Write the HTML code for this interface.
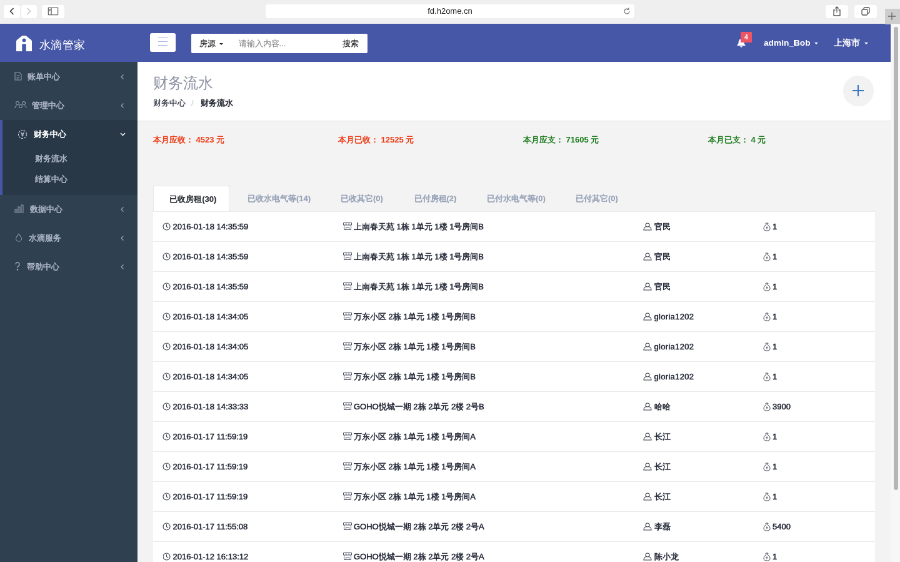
<!DOCTYPE html>
<html lang="zh">
<head>
<meta charset="utf-8">
<title>财务流水</title>
<style>
*{box-sizing:border-box;margin:0;padding:0}
html,body{width:900px;height:562px;overflow:hidden;background:#f3f3f4;position:relative}
body{font-family:"Liberation Sans",sans-serif;font-size:13px;color:#676a6c}
#root{position:absolute;left:0;top:0;width:1440px;height:899.200px;transform:scale(.625);transform-origin:0 0;overflow:hidden;will-change:transform}
svg{display:block}
/* safari chrome */
.safari{position:absolute;left:0;top:0;width:1440px;height:38px;background:#efefef}
.sbtn{position:absolute;top:7.800px;height:21px;background:#fff;border-radius:4px}
.sbtn svg{position:absolute;left:50%;top:50%;transform:translate(-50%,-50%)}
.url{position:absolute;left:425px;top:7px;width:590px;height:22px;background:#fff;border-radius:4px;text-align:center;font-size:13px;line-height:22px;color:#222}
.newtab{position:absolute;left:1416px;top:13.500px;width:24px;height:25px;background:#cdcdcd}
/* scrollbar */
.sbar{position:absolute;left:1425px;top:38px;width:15px;height:862px;background:#f7f7f7}
.sbar i{position:absolute;left:4.500px;top:4.500px;width:7px;height:741px;border-radius:4px;background:#b6b6b6}
/* page */
.page{position:absolute;left:0;top:38px;width:1425px;height:862px;overflow:hidden;background:#f3f3f4}
.side{position:absolute;left:0;top:0;width:220px;height:862px;background:linear-gradient(to bottom,transparent 61px,#2f4050 61px)}
.logo{height:61px;position:relative}
.logo svg{position:absolute;left:26px;top:19px}
.logo span{position:absolute;left:62.500px;top:20px;font-size:18px;line-height:28px;color:#fff;font-weight:300;letter-spacing:.6px}
.nav{list-style:none;padding-top:1px}
.nav>li>a{text-shadow:0 0 .6px rgba(167,177,194,.55);display:block;height:46px;line-height:46px;padding-left:44px;color:#a7b1c2;font-weight:bold;font-size:13px;position:relative;text-decoration:none}
.nav>li>a svg.ic{position:absolute;left:23px;top:15px}
.nav>li>a svg.arr{position:absolute;left:193px;top:18px}
.nav>li.act{background:#293846;border-left:4px solid #4757a7;padding-bottom:9px}
.nav>li.act>a{color:#fff;padding-left:50px;text-shadow:0 0 .6px rgba(255,255,255,.55)}
.nav>li.act>a svg.ic{left:24px}
.nav>li.act>a svg.arr{left:188px}
.nav ul{list-style:none}
.nav ul a{text-shadow:0 0 .6px rgba(167,177,194,.55);display:block;height:32.5px;line-height:32.5px;padding-left:52px;color:#a7b1c2;font-weight:bold;text-decoration:none}
.main{position:absolute;left:220px;top:0;width:1205px;height:862px}
.top{height:61px;position:relative}
.ham{position:absolute;left:20px;top:14.5px;width:41px;height:30px;background:#fff;border-radius:3px}
.ham i{position:absolute;left:13px;width:15px;height:1.5px;background:#aab4e6}
.search{position:absolute;left:86px;top:16px;width:282px;height:31px;background:#fff;border-radius:2px;font-size:13px;line-height:31px;color:#262626;text-shadow:0 0 .6px rgba(38,38,38,.5)}
.search span{position:absolute;top:0}
.caret{display:inline-block;width:0;height:0;border-left:3px solid transparent;border-right:3px solid transparent;border-top:3.500px solid currentColor;vertical-align:middle;margin-left:6px}
.tr{position:absolute;top:0;height:61px;line-height:61px;color:#fff;font-size:13.700px;font-weight:bold;white-space:nowrap}
.tr .caret{margin-left:6.500px;border-left-width:3.500px;border-right-width:3.500px}
.title{height:95.200px;background:#fff;border-bottom:1px solid #dfe2e6;position:relative}
.title h2{position:absolute;left:25px;top:19px;font-size:23.500px;line-height:30px;font-weight:100;color:#8d94a3}
.bc{position:absolute;left:25px;top:57px;font-size:13px;line-height:18px;color:#2c313e;text-shadow:0 0 .7px rgba(44,49,62,.55)}
.bc b{color:#2a2e36}
.bc i{font-style:normal;text-shadow:none;color:#c4c6c8;padding:0 11px 0 9px}
.plus{position:absolute;left:1128.800px;top:21.500px;width:49px;height:49px;border-radius:50%;background:#f2f2f3}
.plus:before,.plus:after{content:"";position:absolute;background:#3b76c0}
.plus:before{left:15.500px;top:23.600px;width:18px;height:1.800px}
.plus:after{left:23.600px;top:15.500px;width:1.800px;height:18px}
.stats{position:absolute;left:0;top:176px;width:1205px;height:20px;font-size:13px;font-weight:bold;line-height:20px}
.stats span{position:absolute;top:0;white-space:nowrap}
.red{color:#ee3a12}.green{color:#1d7d1d}
.tabs{position:absolute;left:25px;top:259.300px;height:40.400px;width:1154.500px;font-size:13px;font-weight:bold;color:#98a3b8;text-shadow:0 0 .6px rgba(152,163,184,.5);line-height:41.600px}
.tabs span{position:absolute;top:0;white-space:nowrap}
.tabs .on{left:0;width:121.500px;height:41.400px;padding-left:6px;background:#fff;border:1px solid #e7eaec;border-bottom:none;color:#30343a;text-shadow:0 0 .6px rgba(48,52,58,.5);text-align:center;border-radius:3px 3px 0 0}
.panel{position:absolute;left:25px;top:299.700px;width:1154.500px;height:600px;background:#fff;border-top:1px solid #e7eaec}
.row{height:48px;border-bottom:1px solid #e7eaec;position:relative;font-size:13px;line-height:48.400px;color:#202534;-webkit-text-stroke:.35px #202534;text-shadow:0 0 .7px rgba(32,37,52,.5);white-space:nowrap}
.row span{position:absolute;top:0;padding-left:16px}
.row svg{position:absolute;left:-.5px;top:17px}
.c1{left:15.500px}.c2{left:305px}.c2 svg{left:-1.500px}.c3{left:785.500px;letter-spacing:.3px}.c3 svg{left:-2px}.c4{left:975px}.c4 svg{left:.5px}
</style>
</head>
<body>
<div id="root">

<div class="page">
  <div style="position:absolute;left:0;top:0;width:1425px;height:61px;background:#4757a7"></div>
  <div class="side">
    <div class="logo">
      <svg width="25" height="25" viewBox="0 0 25 25"><path d="M9 .5Q12.500-1 16 .5L23.500 6.500Q25 7.500 25 9.500V25H0V9.500Q0 7.500 1.500 6.500z" fill="#fff"/><rect x="9.300" y="13.300" width="6.400" height="11.700" fill="#4757a7"/><circle cx="12.500" cy="7.300" r="2.900" fill="#4757a7"/></svg>
      <span>水滴管家</span>
    </div>
    <ul class="nav">
      <li><a><svg class="ic" width="12" height="14" viewBox="0 0 12 14" fill="none" stroke="#8e99ab" stroke-width="1.100"><path d="M1 1h7l3 3v9H1z"/><path d="M3.500 6h5M3.500 8.500h5M3.500 11h3"/></svg>账单中心<svg class="arr" width="6" height="10" viewBox="0 0 6 10" fill="none" stroke="#97a2b3" stroke-width="1.300"><path d="M4.500 1.500L1 5l3.500 3.500"/></svg></a></li>
      <li><a style="padding-left:51px"><svg class="ic" width="20" height="14" viewBox="0 0 20 14" fill="none" stroke="#8e99ab" stroke-width="1.100"><circle cx="5" cy="4" r="2.500"/><circle cx="15" cy="4" r="2.500"/><circle cx="10" cy="9" r="2.500"/><path d="M1 12c0-3 2-4 4-4M19 12c0-3-2-4-4-4"/></svg>管理中心<svg class="arr" width="6" height="10" viewBox="0 0 6 10" fill="none" stroke="#97a2b3" stroke-width="1.300"><path d="M4.500 1.500L1 5l3.500 3.500"/></svg></a></li>
      <li class="act"><a><svg class="ic" width="16" height="16" viewBox="0 0 16 16" fill="none" stroke="#c5ccd8" stroke-width="1.200"><circle cx="8" cy="8" r="6.500" stroke-dasharray="3 1.500"/><path d="M5.500 5L8 8l2.500-3M8 8v3.500M6 9h4"/></svg>财务中心<svg class="arr" width="9" height="6" viewBox="0 0 9 6" fill="none" stroke="#fff" stroke-width="1.400" style="top:20px"><path d="M1 1l3.500 3.500L8 1"/></svg></a>
        <ul><li><a>财务流水</a></li><li><a>结算中心</a></li></ul>
      </li>
      <li><a style="padding-left:48px"><svg class="ic" width="15" height="14" viewBox="0 0 15 14" fill="none" stroke="#8e99ab" stroke-width="1.100"><path d="M1 8h3v5H1zM6 4h3v9H6zM11 1h3v12h-3z"/></svg>数据中心<svg class="arr" width="6" height="10" viewBox="0 0 6 10" fill="none" stroke="#97a2b3" stroke-width="1.300"><path d="M4.500 1.500L1 5l3.500 3.500"/></svg></a></li>
      <li><a style="padding-left:46px"><svg class="ic" width="14" height="14" viewBox="0 0 14 14" fill="none" stroke="#8e99ab" stroke-width="1.100"><path d="M7 1.200C5 4 2.500 6 2.500 8.800a4.500 4.500 0 0 0 9 0C11.500 6 9 4 7 1.200z"/></svg>水滴服务<svg class="arr" width="6" height="10" viewBox="0 0 6 10" fill="none" stroke="#97a2b3" stroke-width="1.300"><path d="M4.500 1.500L1 5l3.500 3.500"/></svg></a></li>
      <li><a style="padding-left:42.500px"><svg class="ic" width="10" height="14" viewBox="0 0 10 14" fill="none" stroke="#a7b1c2" stroke-width="1.400"><path d="M2 4a3 3 0 1 1 4.500 2.600C5.500 7.300 5 8 5 9.500"/><circle cx="5" cy="12.300" r=".600" fill="#a7b1c2"/></svg>帮助中心<svg class="arr" width="6" height="10" viewBox="0 0 6 10" fill="none" stroke="#97a2b3" stroke-width="1.300"><path d="M4.500 1.500L1 5l3.500 3.500"/></svg></a></li>
    </ul>
  </div>

  <div class="main">
    <div class="top">
      <div class="ham"><i style="top:7px"></i><i style="top:13px"></i><i style="top:19px"></i></div>
      <div class="search"><span style="left:13px">房源<b class="caret"></b></span><span style="left:75.500px;color:#8e8e8e;text-shadow:0 0 .6px rgba(142,142,142,.5)">请输入内容...</span><span style="left:242px">搜索</span></div>
      <svg style="position:absolute;left:958px;top:23px" width="16" height="16" viewBox="0 0 16 16"><path d="M8 1.500c-2.800 0-4.300 2-4.300 4.500 0 3-1.200 4.200-2.200 5v1h13v-1c-1-.800-2.200-2-2.200-5 0-2.500-1.500-4.500-4.300-4.500zM6.200 13a1.800 1.800 0 0 0 3.600 0z" fill="#fff"/></svg>
      <div style="position:absolute;left:965px;top:13px;width:18px;height:17px;background:#ed5565;border-radius:1px;color:#fff;font-size:10.500px;font-weight:bold;line-height:17px;text-align:center">4</div>
      <div class="tr" style="left:1002px">admin_Bob<b class="caret"></b></div>
      <div class="tr" style="left:1114px">上海市<b class="caret"></b></div>
    </div>
    <div class="title">
      <h2>财务流水</h2>
      <div class="bc">财务中心<i>/</i><b>财务流水</b></div>
      <div class="plus"></div>
    </div>
    <div class="stats">
      <span class="red" style="left:25px">本月应收： 4523 元</span>
      <span class="red" style="left:321px">本月已收： 12525 元</span>
      <span class="green" style="left:617px">本月应支： 71605 元</span>
      <span class="green" style="left:913px">本月已支： 4 元</span>
    </div>
    <div class="tabs">
      <span class="on">已收房租(30)</span>
      <span style="left:151px">已收水电气等(14)</span>
      <span style="left:300px">已收其它(0)</span>
      <span style="left:417.500px">已付房租(2)</span>
      <span style="left:534px">已付水电气等(0)</span>
      <span style="left:676px">已付其它(0)</span>
    </div>
    <div class="panel" id="panel">
      <div class="row"><span class="c1"><svg width="13" height="13" viewBox="0 0 13 13" fill="none" stroke="#3a3f4b" stroke-width="1.100"><circle cx="6.500" cy="6.500" r="5.500"/><path d="M6.500 3v3.700l2.500 1.500"/></svg>2016-01-18 14:35:59</span><span class="c2"><svg width="14" height="12" viewBox="0 0 14 12" fill="none" stroke="#4f5565" stroke-width="1"><path d="M.5 .5h13v3.500h-13zM1.500 4v7.500h11V4M4.800 .5v3.500M9.200 .5v3.500M4.500 11.500V7.500h5v4"/></svg>上南春天苑 1栋 1单元 1楼 1号房间B</span><span class="c3"><svg width="14" height="13" viewBox="0 0 14 13" fill="none" stroke="#3a3f4b" stroke-width="1.100"><circle cx="7" cy="4" r="3"/><path d="M4.800 6.500C2 7.500 1 9.500 1 12h12c0-2.500-1-4.500-3.800-5.500"/></svg>官民</span><span class="c4"><svg width="12" height="14" viewBox="0 0 12 14" fill="none" stroke="#3a3f4b" stroke-width="1"><path d="M4 1h4l-1 2.500c2.500 1 4 3.500 4 6 0 2.500-2 3.700-5 3.700s-5-1.200-5-3.700c0-2.500 1.500-5 4-6z"/><path d="M6 6.500v4M4.700 8h2.600"/></svg>1</span></div>
      <div class="row"><span class="c1"><svg width="13" height="13" viewBox="0 0 13 13" fill="none" stroke="#3a3f4b" stroke-width="1.100"><circle cx="6.500" cy="6.500" r="5.500"/><path d="M6.500 3v3.700l2.500 1.500"/></svg>2016-01-18 14:35:59</span><span class="c2"><svg width="14" height="12" viewBox="0 0 14 12" fill="none" stroke="#4f5565" stroke-width="1"><path d="M.5 .5h13v3.500h-13zM1.500 4v7.500h11V4M4.800 .5v3.500M9.200 .5v3.500M4.500 11.500V7.500h5v4"/></svg>上南春天苑 1栋 1单元 1楼 1号房间B</span><span class="c3"><svg width="14" height="13" viewBox="0 0 14 13" fill="none" stroke="#3a3f4b" stroke-width="1.100"><circle cx="7" cy="4" r="3"/><path d="M4.800 6.500C2 7.500 1 9.500 1 12h12c0-2.500-1-4.500-3.800-5.500"/></svg>官民</span><span class="c4"><svg width="12" height="14" viewBox="0 0 12 14" fill="none" stroke="#3a3f4b" stroke-width="1"><path d="M4 1h4l-1 2.500c2.500 1 4 3.500 4 6 0 2.500-2 3.700-5 3.700s-5-1.200-5-3.700c0-2.500 1.500-5 4-6z"/><path d="M6 6.500v4M4.700 8h2.600"/></svg>1</span></div>
      <div class="row"><span class="c1"><svg width="13" height="13" viewBox="0 0 13 13" fill="none" stroke="#3a3f4b" stroke-width="1.100"><circle cx="6.500" cy="6.500" r="5.500"/><path d="M6.500 3v3.700l2.500 1.500"/></svg>2016-01-18 14:35:59</span><span class="c2"><svg width="14" height="12" viewBox="0 0 14 12" fill="none" stroke="#4f5565" stroke-width="1"><path d="M.5 .5h13v3.500h-13zM1.500 4v7.500h11V4M4.800 .5v3.500M9.200 .5v3.500M4.500 11.500V7.500h5v4"/></svg>上南春天苑 1栋 1单元 1楼 1号房间B</span><span class="c3"><svg width="14" height="13" viewBox="0 0 14 13" fill="none" stroke="#3a3f4b" stroke-width="1.100"><circle cx="7" cy="4" r="3"/><path d="M4.800 6.500C2 7.500 1 9.500 1 12h12c0-2.500-1-4.500-3.800-5.500"/></svg>官民</span><span class="c4"><svg width="12" height="14" viewBox="0 0 12 14" fill="none" stroke="#3a3f4b" stroke-width="1"><path d="M4 1h4l-1 2.500c2.500 1 4 3.500 4 6 0 2.500-2 3.700-5 3.700s-5-1.200-5-3.700c0-2.500 1.500-5 4-6z"/><path d="M6 6.500v4M4.700 8h2.600"/></svg>1</span></div>
      <div class="row"><span class="c1"><svg width="13" height="13" viewBox="0 0 13 13" fill="none" stroke="#3a3f4b" stroke-width="1.100"><circle cx="6.500" cy="6.500" r="5.500"/><path d="M6.500 3v3.700l2.500 1.500"/></svg>2016-01-18 14:34:05</span><span class="c2"><svg width="14" height="12" viewBox="0 0 14 12" fill="none" stroke="#4f5565" stroke-width="1"><path d="M.5 .5h13v3.500h-13zM1.500 4v7.500h11V4M4.800 .5v3.500M9.200 .5v3.500M4.500 11.500V7.500h5v4"/></svg>万东小区 2栋 1单元 1楼 1号房间B</span><span class="c3"><svg width="14" height="13" viewBox="0 0 14 13" fill="none" stroke="#3a3f4b" stroke-width="1.100"><circle cx="7" cy="4" r="3"/><path d="M4.800 6.500C2 7.500 1 9.500 1 12h12c0-2.500-1-4.500-3.800-5.500"/></svg>gloria1202</span><span class="c4"><svg width="12" height="14" viewBox="0 0 12 14" fill="none" stroke="#3a3f4b" stroke-width="1"><path d="M4 1h4l-1 2.500c2.500 1 4 3.500 4 6 0 2.500-2 3.700-5 3.700s-5-1.200-5-3.700c0-2.500 1.500-5 4-6z"/><path d="M6 6.500v4M4.700 8h2.600"/></svg>1</span></div>
      <div class="row"><span class="c1"><svg width="13" height="13" viewBox="0 0 13 13" fill="none" stroke="#3a3f4b" stroke-width="1.100"><circle cx="6.500" cy="6.500" r="5.500"/><path d="M6.500 3v3.700l2.500 1.500"/></svg>2016-01-18 14:34:05</span><span class="c2"><svg width="14" height="12" viewBox="0 0 14 12" fill="none" stroke="#4f5565" stroke-width="1"><path d="M.5 .5h13v3.500h-13zM1.500 4v7.500h11V4M4.800 .5v3.500M9.200 .5v3.500M4.500 11.500V7.500h5v4"/></svg>万东小区 2栋 1单元 1楼 1号房间B</span><span class="c3"><svg width="14" height="13" viewBox="0 0 14 13" fill="none" stroke="#3a3f4b" stroke-width="1.100"><circle cx="7" cy="4" r="3"/><path d="M4.800 6.500C2 7.500 1 9.500 1 12h12c0-2.500-1-4.500-3.800-5.500"/></svg>gloria1202</span><span class="c4"><svg width="12" height="14" viewBox="0 0 12 14" fill="none" stroke="#3a3f4b" stroke-width="1"><path d="M4 1h4l-1 2.500c2.500 1 4 3.500 4 6 0 2.500-2 3.700-5 3.700s-5-1.200-5-3.700c0-2.500 1.500-5 4-6z"/><path d="M6 6.500v4M4.700 8h2.600"/></svg>1</span></div>
      <div class="row"><span class="c1"><svg width="13" height="13" viewBox="0 0 13 13" fill="none" stroke="#3a3f4b" stroke-width="1.100"><circle cx="6.500" cy="6.500" r="5.500"/><path d="M6.500 3v3.700l2.500 1.500"/></svg>2016-01-18 14:34:05</span><span class="c2"><svg width="14" height="12" viewBox="0 0 14 12" fill="none" stroke="#4f5565" stroke-width="1"><path d="M.5 .5h13v3.500h-13zM1.500 4v7.500h11V4M4.800 .5v3.500M9.200 .5v3.500M4.500 11.500V7.500h5v4"/></svg>万东小区 2栋 1单元 1楼 1号房间B</span><span class="c3"><svg width="14" height="13" viewBox="0 0 14 13" fill="none" stroke="#3a3f4b" stroke-width="1.100"><circle cx="7" cy="4" r="3"/><path d="M4.800 6.500C2 7.500 1 9.500 1 12h12c0-2.500-1-4.500-3.800-5.500"/></svg>gloria1202</span><span class="c4"><svg width="12" height="14" viewBox="0 0 12 14" fill="none" stroke="#3a3f4b" stroke-width="1"><path d="M4 1h4l-1 2.500c2.500 1 4 3.500 4 6 0 2.500-2 3.700-5 3.700s-5-1.200-5-3.700c0-2.500 1.500-5 4-6z"/><path d="M6 6.500v4M4.700 8h2.600"/></svg>1</span></div>
      <div class="row"><span class="c1"><svg width="13" height="13" viewBox="0 0 13 13" fill="none" stroke="#3a3f4b" stroke-width="1.100"><circle cx="6.500" cy="6.500" r="5.500"/><path d="M6.500 3v3.700l2.500 1.500"/></svg>2016-01-18 14:33:33</span><span class="c2"><svg width="14" height="12" viewBox="0 0 14 12" fill="none" stroke="#4f5565" stroke-width="1"><path d="M.5 .5h13v3.500h-13zM1.500 4v7.500h11V4M4.800 .5v3.500M9.200 .5v3.500M4.500 11.500V7.500h5v4"/></svg>GOHO悦城一期 2栋 2单元 2楼 2号B</span><span class="c3"><svg width="14" height="13" viewBox="0 0 14 13" fill="none" stroke="#3a3f4b" stroke-width="1.100"><circle cx="7" cy="4" r="3"/><path d="M4.800 6.500C2 7.500 1 9.500 1 12h12c0-2.500-1-4.500-3.800-5.500"/></svg>哈哈</span><span class="c4"><svg width="12" height="14" viewBox="0 0 12 14" fill="none" stroke="#3a3f4b" stroke-width="1"><path d="M4 1h4l-1 2.500c2.500 1 4 3.500 4 6 0 2.500-2 3.700-5 3.700s-5-1.200-5-3.700c0-2.500 1.500-5 4-6z"/><path d="M6 6.500v4M4.700 8h2.600"/></svg>3900</span></div>
      <div class="row"><span class="c1"><svg width="13" height="13" viewBox="0 0 13 13" fill="none" stroke="#3a3f4b" stroke-width="1.100"><circle cx="6.500" cy="6.500" r="5.500"/><path d="M6.500 3v3.700l2.500 1.500"/></svg>2016-01-17 11:59:19</span><span class="c2"><svg width="14" height="12" viewBox="0 0 14 12" fill="none" stroke="#4f5565" stroke-width="1"><path d="M.5 .5h13v3.500h-13zM1.500 4v7.500h11V4M4.800 .5v3.500M9.200 .5v3.500M4.500 11.500V7.500h5v4"/></svg>万东小区 2栋 1单元 1楼 1号房间A</span><span class="c3"><svg width="14" height="13" viewBox="0 0 14 13" fill="none" stroke="#3a3f4b" stroke-width="1.100"><circle cx="7" cy="4" r="3"/><path d="M4.800 6.500C2 7.500 1 9.500 1 12h12c0-2.500-1-4.500-3.800-5.500"/></svg>长江</span><span class="c4"><svg width="12" height="14" viewBox="0 0 12 14" fill="none" stroke="#3a3f4b" stroke-width="1"><path d="M4 1h4l-1 2.500c2.500 1 4 3.500 4 6 0 2.500-2 3.700-5 3.700s-5-1.200-5-3.700c0-2.500 1.500-5 4-6z"/><path d="M6 6.500v4M4.700 8h2.600"/></svg>1</span></div>
      <div class="row"><span class="c1"><svg width="13" height="13" viewBox="0 0 13 13" fill="none" stroke="#3a3f4b" stroke-width="1.100"><circle cx="6.500" cy="6.500" r="5.500"/><path d="M6.500 3v3.700l2.500 1.500"/></svg>2016-01-17 11:59:19</span><span class="c2"><svg width="14" height="12" viewBox="0 0 14 12" fill="none" stroke="#4f5565" stroke-width="1"><path d="M.5 .5h13v3.500h-13zM1.500 4v7.500h11V4M4.800 .5v3.500M9.200 .5v3.500M4.500 11.500V7.500h5v4"/></svg>万东小区 2栋 1单元 1楼 1号房间A</span><span class="c3"><svg width="14" height="13" viewBox="0 0 14 13" fill="none" stroke="#3a3f4b" stroke-width="1.100"><circle cx="7" cy="4" r="3"/><path d="M4.800 6.500C2 7.500 1 9.500 1 12h12c0-2.500-1-4.500-3.800-5.500"/></svg>长江</span><span class="c4"><svg width="12" height="14" viewBox="0 0 12 14" fill="none" stroke="#3a3f4b" stroke-width="1"><path d="M4 1h4l-1 2.500c2.500 1 4 3.500 4 6 0 2.500-2 3.700-5 3.700s-5-1.200-5-3.700c0-2.500 1.500-5 4-6z"/><path d="M6 6.500v4M4.700 8h2.600"/></svg>1</span></div>
      <div class="row"><span class="c1"><svg width="13" height="13" viewBox="0 0 13 13" fill="none" stroke="#3a3f4b" stroke-width="1.100"><circle cx="6.500" cy="6.500" r="5.500"/><path d="M6.500 3v3.700l2.500 1.500"/></svg>2016-01-17 11:59:19</span><span class="c2"><svg width="14" height="12" viewBox="0 0 14 12" fill="none" stroke="#4f5565" stroke-width="1"><path d="M.5 .5h13v3.500h-13zM1.500 4v7.500h11V4M4.800 .5v3.500M9.200 .5v3.500M4.500 11.500V7.500h5v4"/></svg>万东小区 2栋 1单元 1楼 1号房间A</span><span class="c3"><svg width="14" height="13" viewBox="0 0 14 13" fill="none" stroke="#3a3f4b" stroke-width="1.100"><circle cx="7" cy="4" r="3"/><path d="M4.800 6.500C2 7.500 1 9.500 1 12h12c0-2.500-1-4.500-3.800-5.500"/></svg>长江</span><span class="c4"><svg width="12" height="14" viewBox="0 0 12 14" fill="none" stroke="#3a3f4b" stroke-width="1"><path d="M4 1h4l-1 2.500c2.500 1 4 3.500 4 6 0 2.500-2 3.700-5 3.700s-5-1.200-5-3.700c0-2.500 1.500-5 4-6z"/><path d="M6 6.500v4M4.700 8h2.600"/></svg>1</span></div>
      <div class="row"><span class="c1"><svg width="13" height="13" viewBox="0 0 13 13" fill="none" stroke="#3a3f4b" stroke-width="1.100"><circle cx="6.500" cy="6.500" r="5.500"/><path d="M6.500 3v3.700l2.500 1.500"/></svg>2016-01-17 11:55:08</span><span class="c2"><svg width="14" height="12" viewBox="0 0 14 12" fill="none" stroke="#4f5565" stroke-width="1"><path d="M.5 .5h13v3.500h-13zM1.500 4v7.500h11V4M4.800 .5v3.500M9.200 .5v3.500M4.500 11.500V7.500h5v4"/></svg>GOHO悦城一期 2栋 2单元 2楼 2号A</span><span class="c3"><svg width="14" height="13" viewBox="0 0 14 13" fill="none" stroke="#3a3f4b" stroke-width="1.100"><circle cx="7" cy="4" r="3"/><path d="M4.800 6.500C2 7.500 1 9.500 1 12h12c0-2.500-1-4.500-3.800-5.500"/></svg>李磊</span><span class="c4"><svg width="12" height="14" viewBox="0 0 12 14" fill="none" stroke="#3a3f4b" stroke-width="1"><path d="M4 1h4l-1 2.500c2.500 1 4 3.500 4 6 0 2.500-2 3.700-5 3.700s-5-1.200-5-3.700c0-2.500 1.500-5 4-6z"/><path d="M6 6.500v4M4.700 8h2.600"/></svg>5400</span></div>
      <div class="row"><span class="c1"><svg width="13" height="13" viewBox="0 0 13 13" fill="none" stroke="#3a3f4b" stroke-width="1.100"><circle cx="6.500" cy="6.500" r="5.500"/><path d="M6.500 3v3.700l2.500 1.500"/></svg>2016-01-12 16:13:12</span><span class="c2"><svg width="14" height="12" viewBox="0 0 14 12" fill="none" stroke="#4f5565" stroke-width="1"><path d="M.5 .5h13v3.500h-13zM1.500 4v7.500h11V4M4.800 .5v3.500M9.200 .5v3.500M4.500 11.500V7.500h5v4"/></svg>GOHO悦城一期 2栋 2单元 2楼 2号A</span><span class="c3"><svg width="14" height="13" viewBox="0 0 14 13" fill="none" stroke="#3a3f4b" stroke-width="1.100"><circle cx="7" cy="4" r="3"/><path d="M4.800 6.500C2 7.500 1 9.500 1 12h12c0-2.500-1-4.500-3.800-5.500"/></svg>陈小龙</span><span class="c4"><svg width="12" height="14" viewBox="0 0 12 14" fill="none" stroke="#3a3f4b" stroke-width="1"><path d="M4 1h4l-1 2.500c2.500 1 4 3.500 4 6 0 2.500-2 3.700-5 3.700s-5-1.200-5-3.700c0-2.500 1.500-5 4-6z"/><path d="M6 6.500v4M4.700 8h2.600"/></svg>1</span></div>
    </div>
  </div>
</div>

<div class="safari">
  <div class="sbtn" style="left:6px;width:25.500px"><svg width="8" height="12" viewBox="0 0 8 12" fill="none" stroke="#333" stroke-width="1.600"><path d="M6.500 1L1.500 6l5 5"/></svg></div>
  <div class="sbtn" style="left:33.500px;width:25.500px"><svg width="8" height="12" viewBox="0 0 8 12" fill="none" stroke="#c8c8c8" stroke-width="1.600"><path d="M1.500 1l5 5-5 5"/></svg></div>
  <div class="sbtn" style="left:67px;width:36px"><svg width="17" height="13" viewBox="0 0 17 13" fill="none" stroke="#555" stroke-width="1.300"><rect x=".700" y=".700" width="15.600" height="11.600" rx="1"/><path d="M5.500 1v11M2.300 3.500h1.800M2.300 5.500h1.800"/></svg></div>
  <div class="url">fd.h2ome.cn<svg style="position:absolute;left:572px;top:5px" width="12" height="12" viewBox="0 0 12 12" fill="none" stroke="#666" stroke-width="1.100"><path d="M10 6a4 4 0 1 1-1.500-3.100"/><path d="M8.800.500v2.700H6.100"/></svg></div>
  <div class="sbtn" style="left:1321px;width:36px"><svg width="13" height="16" viewBox="0 0 13 16" fill="none" stroke="#555" stroke-width="1.300"><path d="M4 6H1.500v9h10V6H9M6.500 10V1M4 3.500L6.500 1 9 3.500"/></svg></div>
  <div class="sbtn" style="left:1367px;width:36px"><svg width="14" height="14" viewBox="0 0 14 14" fill="none" stroke="#555" stroke-width="1.300"><rect x="1" y="4" width="9" height="9" rx="1.500"/><path d="M4 4V2.500A1.500 1.500 0 0 1 5.500 1H11.500A1.500 1.500 0 0 1 13 2.500V8.500A1.500 1.500 0 0 1 11.500 10H10"/></svg></div>
  <div class="newtab"><svg style="position:absolute;left:5px;top:6px" width="12" height="12" viewBox="0 0 12 12" stroke="#666" stroke-width="1.300"><path d="M6 0v12M0 6h12"/></svg></div>
</div>
<div class="sbar"><i></i></div>

</div>
</body>
</html>
